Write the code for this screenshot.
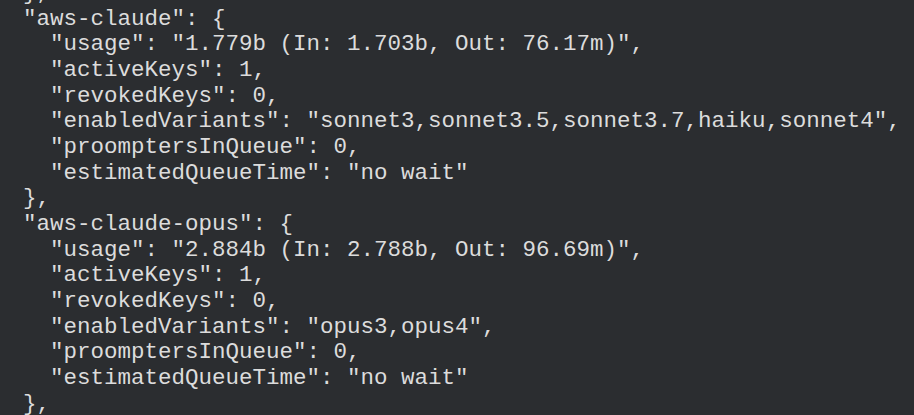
import React from "react";

const lines = [
  "  },",
  '  "aws-claude": {',
  '    "usage": "1.779b (In: 1.703b, Out: 76.17m)",',
  '    "activeKeys": 1,',
  '    "revokedKeys": 0,',
  '    "enabledVariants": "sonnet3,sonnet3.5,sonnet3.7,haiku,sonnet4",',
  '    "proomptersInQueue": 0,',
  '    "estimatedQueueTime": "no wait"',
  "  },",
  '  "aws-claude-opus": {',
  '    "usage": "2.884b (In: 2.788b, Out: 96.69m)",',
  '    "activeKeys": 1,',
  '    "revokedKeys": 0,',
  '    "enabledVariants": "opus3,opus4",',
  '    "proomptersInQueue": 0,',
  '    "estimatedQueueTime": "no wait"',
  "  },",
];

const App = () => {
  return (
    <div className="w-[914px] h-[415px] overflow-hidden bg-[#2b2d30]">
      <pre className="-mt-[19px] -ml-[4px] font-['Liberation_Mono','Courier_New',monospace] text-[22.5px] leading-[25.67px] text-[#dcdcdc]">
        {lines.join("\n")}
      </pre>
    </div>
  );
};

export default App;
